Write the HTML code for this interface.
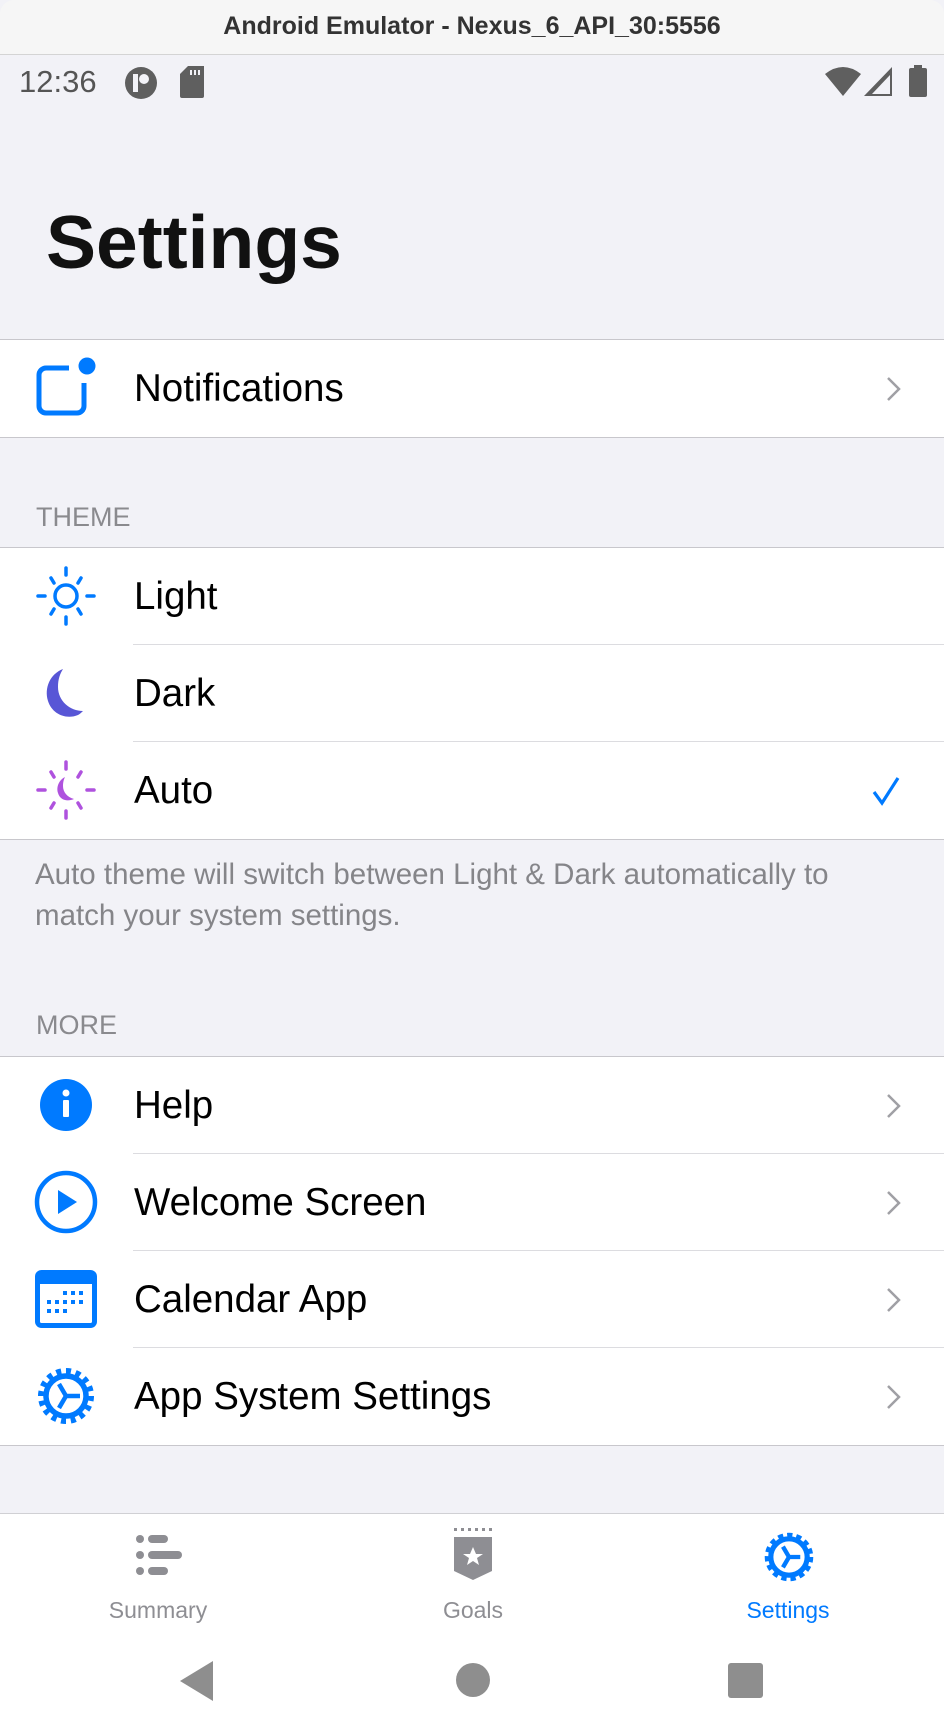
<!DOCTYPE html>
<html><head><meta charset="utf-8"><style>
*{margin:0;padding:0;box-sizing:border-box}
body{width:944px;height:1736px;background:#f2f2f7;font-family:"Liberation Sans",Arial,sans-serif;position:relative;overflow:hidden;color:#000}
.abs{position:absolute}
.titlebar{left:0;top:0;width:944px;height:55px;background:#f6f6f6;border-bottom:1px solid #d4d4d4;border-radius:14px 14px 0 0;text-align:center;font-weight:bold;font-size:25px;line-height:53px;color:#333}
.group{position:absolute;left:0;width:944px;background:#fff;border-top:1px solid #c8c7cc;border-bottom:1px solid #c8c7cc}
.row{position:relative;height:97px}
.row .t{position:absolute;left:134px;top:0;line-height:97px;font-size:38.5px}
.row .ic{position:absolute;left:35px;top:17px;width:62px;height:62px;overflow:visible}
.row .sep{position:absolute;left:133px;right:0;bottom:0;height:1px;background:#dcdce0}
.chev{position:absolute;left:886px;top:36px}
.hdr{position:absolute;left:36px;font-size:27px;color:#8a8a8e}
.tab{position:absolute;top:1513px;left:0;width:944px;height:223px;background:#fff;border-top:1px solid #d0d0d4}
.tl{position:absolute;top:1597px;font-size:23px;color:#8e8e93;text-align:center;width:200px}
</style></head><body>
<div class="abs titlebar">Android Emulator - Nexus_6_API_30:5556</div>
<div class="abs" style="left:19px;top:64px;font-size:31px;color:#555">12:36</div>
<svg class="abs" style="left:124px;top:66px" width="34" height="34" viewBox="0 0 34 34"><circle cx="17" cy="17" r="16" fill="#5f5f5f"/><rect x="9" y="8" width="5" height="18" fill="#f2f2f7"/><circle cx="20" cy="13" r="5" fill="#f2f2f7"/></svg>
<svg class="abs" style="left:180px;top:66px" width="26" height="32" viewBox="0 0 26 32"><path d="M8 0H24V30a2 2 0 0 1-2 2H2a2 2 0 0 1-2-2V8Z" fill="#5f5f5f"/><rect x="10" y="4" width="2" height="5" fill="#f2f2f7"/><rect x="14" y="4" width="2" height="5" fill="#f2f2f7"/><rect x="18" y="4" width="2" height="5" fill="#f2f2f7"/></svg>
<svg class="abs" style="left:825px;top:66px" width="36" height="30" viewBox="0 0 36 30"><path d="M0 8Q18-6 36 8L18 30Z" fill="#5f5f5f"/></svg>
<svg class="abs" style="left:864px;top:67px" width="30" height="29"><path d="M0 29L28 0V29Z" fill="#5f5f5f"/><path d="M8 27L26 8V27Z" fill="#f2f2f7"/></svg>
<svg class="abs" style="left:908px;top:65px" width="20" height="32"><rect x="6" y="0" width="8" height="4" fill="#5f5f5f"/><rect x="1" y="3" width="18" height="29" rx="2" fill="#5f5f5f"/></svg>

<div class="abs" style="left:46px;top:199px;font-size:75px;font-weight:bold;color:#111">Settings</div>

<div class="group" style="top:339px">
 <div class="row">
  <svg class="ic" viewBox="0 0 62 62"><path d="M34 11H11a7 7 0 0 0-7 7v31a7 7 0 0 0 7 7h31a7 7 0 0 0 7-7V26" fill="none" stroke="#007aff" stroke-width="5"/><circle cx="52" cy="9" r="8.5" fill="#007aff"/></svg>
  <div class="t">Notifications</div>
  <svg class="chev" width="16" height="26"><path d="M2 2L13 13L2 24" fill="none" stroke="#a0a0a5" stroke-width="2.5"/></svg>
 </div>
</div>

<div class="hdr" style="top:502px">THEME</div>
<div class="group" style="top:547px">
 <div class="row">
  <svg class="ic" viewBox="0 0 62 62"><g stroke="#007aff" stroke-width="3.5" stroke-linecap="round" fill="none"><circle cx="31" cy="31" r="11"/><path d="M31 3v7M31 52v7M3 31h7M52 31h7M16 13l3 5M43 44l3 5M16 49l3-5M43 18l3-5"/></g></svg>
  <div class="t">Light</div><div class="sep"></div>
 </div>
 <div class="row">
  <svg class="ic" viewBox="0 0 62 62"><path d="M28 7C15 12 9 26 13 39c4 13 18 19 30 14 2-1 4-3 5-4C35 49 23 39 23 25c0-8 2-13 5-18Z" fill="#5856d6"/></svg>
  <div class="t">Dark</div><div class="sep"></div>
 </div>
 <div class="row">
  <svg class="ic" viewBox="0 0 62 62"><g stroke="#af52de" stroke-width="3.5" stroke-linecap="round" fill="none"><path d="M31 3v7M31 52v7M3 31h7M52 31h7M16 13l3 5M43 44l3 5M16 49l3-5M43 18l3-5"/></g><path d="M30 18c-6 3-9 10-7 16 2 7 9 9 16 6-7-2-11-7-11-13 0-4 1-7 2-9Z" fill="#af52de"/></svg>
  <div class="t">Auto</div>
  <svg class="abs" style="left:872px;top:34px" width="28" height="30"><path d="M2 16L10 27L26 2" fill="none" stroke="#007aff" stroke-width="3.2"/></svg>
 </div>
</div>
<div class="abs" style="left:35px;top:854px;font-size:29.5px;line-height:41px;color:#858589">Auto theme will switch between Light &amp; Dark automatically to<br>match your system settings.</div>

<div class="hdr" style="top:1010px">MORE</div>
<div class="group" style="top:1056px">
 <div class="row">
  <svg class="ic" viewBox="0 0 62 62"><circle cx="31" cy="31" r="26" fill="#007aff"/><circle cx="31" cy="19" r="3.5" fill="#fff"/><rect x="28" y="26" width="6" height="17" rx="1" fill="#fff"/></svg>
  <div class="t">Help</div><div class="sep"></div>
  <svg class="chev" width="16" height="26"><path d="M2 2L13 13L2 24" fill="none" stroke="#a0a0a5" stroke-width="2.5"/></svg>
 </div>
 <div class="row">
  <svg class="ic" viewBox="0 0 62 62"><circle cx="31" cy="31" r="29" fill="none" stroke="#007aff" stroke-width="4.5"/><path d="M23 19L42 31L23 43Z" fill="#007aff"/></svg>
  <div class="t">Welcome Screen</div><div class="sep"></div>
  <svg class="chev" width="16" height="26"><path d="M2 2L13 13L2 24" fill="none" stroke="#a0a0a5" stroke-width="2.5"/></svg>
 </div>
 <div class="row">
  <svg class="ic" viewBox="0 0 62 62"><rect x="2.5" y="4.5" width="57" height="53" rx="4" fill="none" stroke="#007aff" stroke-width="5"/><rect x="2" y="4" width="58" height="12" fill="#007aff"/><g fill="#007aff"><rect x="28" y="23" width="4" height="4"/><rect x="36" y="23" width="4" height="4"/><rect x="44" y="23" width="4" height="4"/><rect x="12" y="32" width="4" height="4"/><rect x="20" y="32" width="4" height="4"/><rect x="28" y="32" width="4" height="4"/><rect x="36" y="32" width="4" height="4"/><rect x="44" y="32" width="4" height="4"/><rect x="12" y="41" width="4" height="4"/><rect x="20" y="41" width="4" height="4"/><rect x="28" y="41" width="4" height="4"/></g></svg>
  <div class="t">Calendar App</div><div class="sep"></div>
  <svg class="chev" width="16" height="26"><path d="M2 2L13 13L2 24" fill="none" stroke="#a0a0a5" stroke-width="2.5"/></svg>
 </div>
 <div class="row">
  <svg class="ic" viewBox="0 0 62 62"><circle cx="31" cy="31" r="25" fill="none" stroke="#007aff" stroke-width="6" stroke-dasharray="5 4.8"/><circle cx="31" cy="31" r="20" fill="none" stroke="#007aff" stroke-width="5.5"/><path d="M31 31L45 31M31 31L24 19M31 31L24 43" stroke="#007aff" stroke-width="4.5"/></svg>
  <div class="t">App System Settings</div>
  <svg class="chev" width="16" height="26"><path d="M2 2L13 13L2 24" fill="none" stroke="#a0a0a5" stroke-width="2.5"/></svg>
 </div>
</div>

<div class="tab">
 <svg class="abs" style="left:136px;top:20px" width="48" height="42"><g fill="#8e8e93"><circle cx="4" cy="5" r="4"/><circle cx="4" cy="21" r="4"/><circle cx="4" cy="37" r="4"/><rect x="12" y="1" width="20" height="8" rx="4"/><rect x="12" y="17" width="34" height="8" rx="4"/><rect x="12" y="33" width="20" height="8" rx="4"/></g></svg>
 <svg class="abs" style="left:452px;top:14px" width="42" height="52"><g fill="#8e8e93"><rect x="2" y="0" width="3" height="3"/><rect x="9" y="0" width="3" height="3"/><rect x="16" y="0" width="3" height="3"/><rect x="23" y="0" width="3" height="3"/><rect x="30" y="0" width="3" height="3"/><rect x="37" y="0" width="3" height="3"/><path d="M2 9H40V43L21 52L2 43Z"/></g><path d="M21 19l3 7h7l-6 4 2 7-6-4-6 4 2-7-6-4h7Z" fill="#fff"/></svg>
 <svg class="abs" style="left:763px;top:17px" width="52" height="52" viewBox="0 0 60 60"><circle cx="30" cy="30" r="25" fill="none" stroke="#007aff" stroke-width="6" stroke-dasharray="6 4.5"/><circle cx="30" cy="30" r="21" fill="none" stroke="#007aff" stroke-width="6"/><path d="M30 30L43 30M30 30L23 18M30 30L23 42" stroke="#007aff" stroke-width="5"/></svg>
</div>
<div class="tl" style="left:58px;top:1597px">Summary</div>
<div class="tl" style="left:373px;top:1597px">Goals</div>
<div class="tl" style="left:688px;top:1597px;color:#007aff">Settings</div>
<svg class="abs" style="left:180px;top:1661px" width="34" height="40"><path d="M33 0V40L0 20Z" fill="#8e8e8e"/></svg>
<div class="abs" style="left:456px;top:1663px;width:34px;height:34px;border-radius:50%;background:#8e8e8e"></div>
<div class="abs" style="left:728px;top:1663px;width:35px;height:35px;border-radius:3px;background:#8e8e8e"></div>
</body></html>
